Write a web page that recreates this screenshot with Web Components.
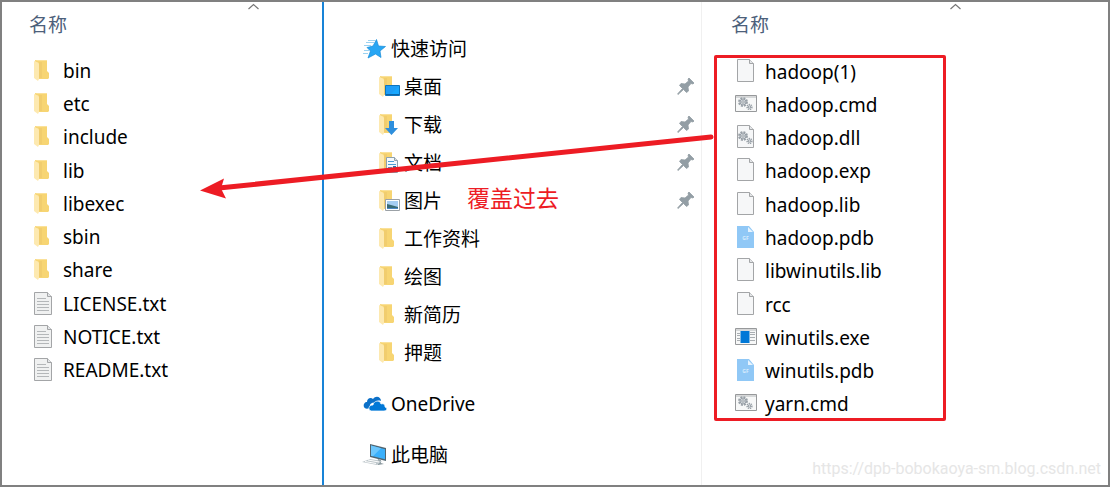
<!DOCTYPE html>
<html lang="zh-CN">
<head>
<meta charset="utf-8">
<meta name="viewport" content="width=device-width">
<title>覆盖过去</title>
<style>
body { margin: 0; background: #fff; font: 19px/24px "Noto Sans", "Noto Sans CJK SC", sans-serif; color: #000; }
</style>
</head>
<body>
<copy-guide></copy-guide>
<script>
const page = (w) => `<path d="M3.500 .5h${w - 5}l4 4v18h-${w - 1}z" fill="#f6f7f8" stroke="#a3a5a7"/><path d="M${w - 1.5} .5v4h4" fill="#e4e6e8" stroke="#a3a5a7"/>`;
const folder = `<path d="M4 1h12v11l2 2v5l-1 1H6z" fill="#f7d573"/><path d="M8 3h3v16H8z" fill="#f1cd6e"/><path d="M4 1h12v1H6z" fill="#fae19a"/><path d="M3 2l4 1.500 1 1V20l-1 2-4-3z" fill="#fde9b0"/>`;
const gears = `<g fill="none" stroke="#98a0a7"><circle cx="10" cy="9" r="4" stroke-width="1.800" stroke-dasharray="2 1.140"/><circle cx="10" cy="9" r="3" fill="#cfd4d8"/><circle cx="10" cy="9" r="1.200" fill="#fff"/><circle cx="16.500" cy="14" r="2.400" stroke-width="1.500" stroke-dasharray="1.200 .68"/><circle cx="16.500" cy="14" r="1.200" fill="#dfe3e6"/></g>`;
const windowFrame = `<path d="M2.500 2.500h21v16h-21z" fill="#f7f8f8" stroke="#97999b"/><path d="M3 4h20" stroke="#b4b7b9"/>`;
const ICONS = {
  folder,
  text: page(18).replace('#f6f7f8', '#f0f1f1') + `<path d="M6 6.500h9M6 9.500h12M6 12.500h12M6 15.500h12M6 18.500h12" stroke="#b4b7b9"/>`,
  file: `<g transform="translate(1 -1)">${page(17)}</g>`,
  dll: `<g transform="translate(1 -1)">${page(17)}</g><g transform="translate(0 1)">${gears}</g>`,
  cmd: windowFrame + gears,
  exe: `${windowFrame}<path d="M4 7.500h3m-3 2h3m-3 3h3m-3 2h3M17 6.500h5m-5 2h5m-5 3h5m-5 3h5" stroke="#a9aeb2"/><path d="M7.500 5h9v12h-9z" fill="#0078d7"/>`,
  pdb: `<path d="M4 0h12l5 6v16H4z" fill="#90c8f6"/><path d="M15 1v5h5z" fill="#e6f3fe"/><text x="12.500" y="14" font-size="5" font-weight="700" text-anchor="middle" fill="#d9edfd">GF</text>`,
  desktop: `${folder}<path d="M9.500 10.500h14v10h-14z" fill="#1e9df7" stroke="#0e74bd"/><path d="M14 20l9-9v9z" fill="#18a8ff"/><path d="M10 19.500h13" stroke="#0c66a8"/>`,
  download: `${folder}<path d="M13 8h5v7h4l-6.500 7L9 15h4z" fill="#2e8fdd"/>`,
  document: `${folder}<path d="M10.500 6.500h8l3 3v12h-11z" fill="#f4f9fd" stroke="#8ea1ae"/><path d="M18.500 6.500v3h3" fill="#ddd" stroke="#8ea1ae"/><path d="M12 10.500h6M12 13.500h8M12 16.500h4M12 19.500h8" stroke="#4c9ed3"/><path d="M17 15h3v3h-3z" fill="#2378b2"/>`,
  picture: `${folder}<path d="M9.500 10.500h14v11h-14z" fill="#fff" stroke="#9ba1a6"/><path d="M11 12h11v8H11z" fill="#a5cdf2"/><path d="M11 15l4 1 7 2v2H11z" fill="#386a74"/><path d="M11 19h11v1H11z" fill="#4a86c4"/>`,
  star: `<path d="M13.500 2.500l2 6.500 7 .5-5.500 4.500 1 6.500-5.500-3.500-7.500 4 2.500-7-3.500-3.500 6-1.500z" fill="#27a6f4" stroke="#168bd8" stroke-width=".7"/><path d="M5 3.500h8M3 5.500h8M1 8.500h7M1 13.500h5M0 16.500h5" stroke="#83c6ee" stroke-width=".8"/>`,
  cloud: `<path d="M1 15c-1-3 1-5 3-5 0-4 4-5 6-3 3-4 8-2 8 2-3-1-5 0-6 2-4-1-6 2-5 5-3 1-5 1-6-1z" fill="#0b70c8"/><path d="M8 19c-3-1-3-6 2-6 1-5 7-5 8-1 3-1 4 1 4 3 3 1 2 4-1 4z" fill="#0078d7" stroke="#fff" stroke-width=".7"/>`,
  computer: `<path d="M7 1l16 4v13L7 14z" fill="#51646f"/><path d="M8 2.500l14 3.700v10L8 12.800z" fill="#3bb0fb"/><path d="M8 2.500l10 2.700-8 8-2-.4z" fill="#6cc6fc"/><path d="M15 16l3 1v3l3 1-6 1-1-2z" fill="#8b999f"/><path d="M7 16l12 2-5 4-15-3z" fill="#bec7cb"/><path d="M5 17l11 2m-14-.500l11 2" stroke="#fff"/>`,
  pin: `<path d="M15 3l5 5-1 1-2-.5-3 3.500.5 4-2 1.500-3-3-5.500 5-.5-.5 5-5.500-3-3 1.500-2 4 .5 3.500-3-.5-2z" fill="#939ea5" stroke="#939ea5" stroke-width=".8"/>`
};

function define(name, html, attribute, update) {
  const template = document.createElement('template');
  template.innerHTML = html;
  customElements.define(name, class extends HTMLElement {
    static get observedAttributes() { return attribute ? [attribute] : []; }
    constructor() {
      super();
      this.attachShadow({ mode: 'open' }).append(template.content.cloneNode(true));
    }
    attributeChangedCallback(key, before, value) { update(this.shadowRoot, value); }
  });
}

define('shell-icon', `<style>
:host { display: block; flex: none; width: 24px; height: 24px; }
svg { display: block; width: 24px; height: 24px; overflow: visible; }
</style><svg viewBox="0 0 24 24" aria-hidden="true"></svg>`,
'name', (root, value) => { root.querySelector('svg').innerHTML = ICONS[value]; });

define('file-row', `<style>
:host { display: flex; align-items: center; }
a { display: flex; align-items: center; gap: 8px; color: inherit; text-decoration: none; white-space: nowrap; }
</style><a href="#"><shell-icon></shell-icon><span><slot></slot></span></a>`,
'kind', (root, value) => root.querySelector('shell-icon').setAttribute('name', value));

define('column-header', `<style>
:host { display: block; position: relative; }
button { display: block; border: 0; background: none; padding: 11px 0 0 27px; font: inherit; color: #4c607a; text-align: left; width: 100%; }
svg { position: absolute; top: 1px; left: 246px; width: 11px; height: 7px; }
</style><button type="button"><slot></slot></button>
<svg viewBox="0 0 11 7" aria-hidden="true"><path d="M.5 6l5-4.500 5 4.500" fill="none" stroke="#777" stroke-width="1.200"/></svg>`);

define('file-list', `<style>
:host { display: grid; grid-auto-rows: 1fr; min-height: 333px; margin: 17px 0 0 29px; }
:host([boxed]) { min-height: 366px; margin: 18px 0 0 10px; width: 232px; padding-left: 19px; box-sizing: border-box; box-shadow: inset 0 0 0 3px #ed1c24; border-radius: 2px; }
</style><slot></slot>`);

define('nav-row', `<style>
:host { display: flex; align-items: center; justify-content: space-between; height: 38px; padding: 0 3px 0 39px; }
:host([child]) { padding-left: 52px; }
:host([spaced]) { margin-top: 13px; }
a { display: flex; align-items: center; gap: 4px; color: inherit; text-decoration: none; white-space: nowrap; }
button { border: 0; padding: 0; background: none; }
:host(:not([pinned])) button { display: none; }
</style><a href="#"><shell-icon></shell-icon><span><slot></slot></span></a>
<button type="button" aria-label="取消固定"><shell-icon name="pin"></shell-icon></button>`,
'kind', (root, value) => root.querySelector('a shell-icon').setAttribute('name', value));

define('overlay-arrow', `<style>
:host { position: absolute; inset: -2px -3px auto -2px; pointer-events: none; }
svg { display: block; width: 100%; height: auto; }
</style><svg viewBox="0 0 1111 487" aria-hidden="true"><path d="M219 188L711 137" stroke="#ed1c24" stroke-width="5" stroke-linecap="round"/><path d="M200 190.500l24-12-3 10 5 10z" fill="#ed1c24"/></svg>`);

define('copy-guide', `<style>
:host { display: grid; grid-template-columns: 320fr 380fr 406fr; position: relative; box-sizing: border-box; min-height: 100vh; margin-right: 1px; border: 2px solid #808080; }
.tree { border-left: 2px solid #1883d7; border-right: 1px solid #f0f0f0; padding-top: 28px; }
.source { padding-left: 2px; }
.note { position: absolute; left: 465px; top: 182px; font-size: 23px; line-height: 28px; color: #ed1c24; }
.mark { position: absolute; right: 7px; bottom: 4px; font: 16px/24px Roboto, sans-serif; color: #e6e6e6; }
</style>
<section>
<column-header>名称</column-header>
<file-list>
<file-row kind="folder">bin</file-row><file-row kind="folder">etc</file-row><file-row kind="folder">include</file-row><file-row kind="folder">lib</file-row><file-row kind="folder">libexec</file-row><file-row kind="folder">sbin</file-row><file-row kind="folder">share</file-row><file-row kind="text">LICENSE.txt</file-row><file-row kind="text">NOTICE.txt</file-row><file-row kind="text">README.txt</file-row>
</file-list>
</section>
<nav class="tree">
<nav-row kind="star">快速访问</nav-row>
<nav-row child pinned kind="desktop">桌面</nav-row>
<nav-row child pinned kind="download">下载</nav-row>
<nav-row child pinned kind="document">文档</nav-row>
<nav-row child pinned kind="picture">图片</nav-row>
<nav-row child kind="folder">工作资料</nav-row>
<nav-row child kind="folder">绘图</nav-row>
<nav-row child kind="folder">新简历</nav-row>
<nav-row child kind="folder">押题</nav-row>
<nav-row spaced kind="cloud">OneDrive</nav-row>
<nav-row spaced kind="computer">此电脑</nav-row>
</nav>
<section class="source">
<column-header>名称</column-header>
<file-list boxed>
<file-row kind="file">hadoop(1)</file-row><file-row kind="cmd">hadoop.cmd</file-row><file-row kind="dll">hadoop.dll</file-row><file-row kind="file">hadoop.exp</file-row><file-row kind="file">hadoop.lib</file-row><file-row kind="pdb">hadoop.pdb</file-row><file-row kind="file">libwinutils.lib</file-row><file-row kind="file">rcc</file-row><file-row kind="exe">winutils.exe</file-row><file-row kind="pdb">winutils.pdb</file-row><file-row kind="cmd">yarn.cmd</file-row>
</file-list>
</section>
<overlay-arrow></overlay-arrow>
<span class="note">覆盖过去</span>
<span class="mark">https://dpb-bobokaoya-sm.blog.csdn.net</span>`);
</script>
</body>
</html>
